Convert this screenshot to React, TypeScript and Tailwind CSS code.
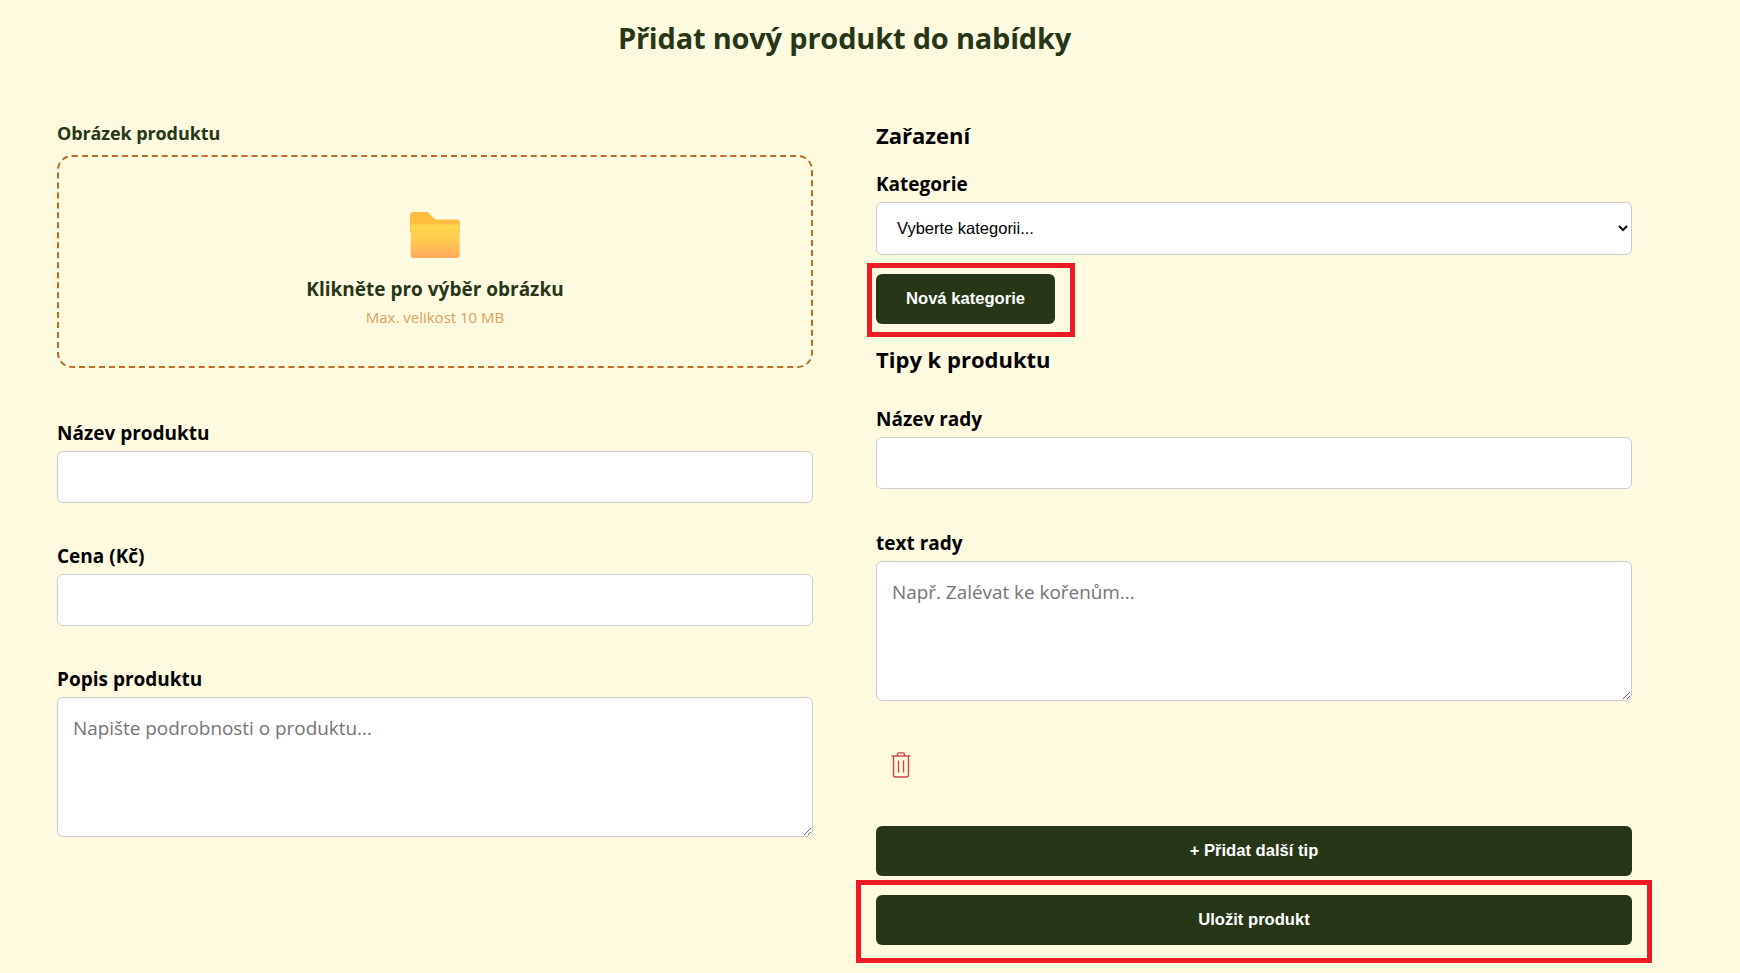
const sans = "font-['Open_Sans','Noto_Sans',sans-serif]";

function Label({ children, dark = false }: { children: React.ReactNode; dark?: boolean }) {
  return (
    <label className={`block h-[22px] mb-[7px] leading-[22px] font-bold ${dark ? "text-[18px] text-[#283618] tracking-[-0.1px]" : "text-[19px] text-black"}`}>
      {children}
    </label>
  );
}

const fieldBase =
  "block w-full bg-white border border-[#cccccc] rounded-[6px] outline-none";

function FolderIcon() {
  return (
    <svg width="50" height="46" viewBox="0 0 50 46" aria-hidden="true">
      <defs>
        <linearGradient id="folderFront" x1="0" y1="0" x2="0" y2="1">
          <stop offset="0" stopColor="#FFD84F" />
          <stop offset="0.45" stopColor="#FFCB4E" />
          <stop offset="1" stopColor="#FFA95E" />
        </linearGradient>
      </defs>
      <path d="M0 3.5A3.5 3.5 0 0 1 3.5 0H17.5L25.5 7.5H46.5A3.5 3.5 0 0 1 50 11V20H0Z" fill="#FFBD40" />
      <rect x="0.7" y="12.5" width="49" height="33.5" rx="3" fill="url(#folderFront)" />
    </svg>
  );
}

function TrashIcon() {
  return (
    <svg width="20" height="26" viewBox="0 0 20 26" fill="none" stroke="#C9464C" strokeWidth="1.4" aria-hidden="true">
      <path d="M0.5 4H19.5" />
      <path d="M6.5 4V2.4A1.5 1.5 0 0 1 8 0.9H12A1.5 1.5 0 0 1 13.5 2.4V4" />
      <path d="M2.5 4V23A2 2 0 0 0 4.5 25H15.5A2 2 0 0 0 17.5 23V4" />
      <path d="M7.5 8.5V20.5" />
      <path d="M12.5 8.5V20.5" />
    </svg>
  );
}

function Annotation({ className }: { className: string }) {
  return <span aria-hidden="true" className={`absolute border-[5px] border-[#ED1C24] pointer-events-none ${className}`} />;
}

function DarkButton({ children, className = "" }: { children: React.ReactNode; className?: string }) {
  return (
    <button
      type="button"
      className={`h-[50px] rounded-[6px] bg-[#283618] text-white text-[16.6px] font-bold font-['Liberation_Sans',sans-serif] ${className}`}
    >
      {children}
    </button>
  );
}

export default function App() {
  return (
    <div className={`min-h-[973px] bg-[#FEFAE0] ${sans}`}>
      <div className="ml-[57px] w-[1575px] pt-[19px]">
        <h1 className="h-[38px] text-center text-[29px] leading-[38px] font-bold tracking-[-0.2px] text-[#283618]">
          Přidat nový produkt do nabídky
        </h1>
        <div className="mt-[65px] grid grid-cols-2 gap-x-[63px]">
          <div>
            <Label dark>Obrázek produktu</Label>
            <div className="mt-[11px] mb-[54px] flex h-[213px] flex-col items-center rounded-[15px] border-2 border-dashed border-[#BC6C25] pt-[55px]">
              <FolderIcon />
              <p className="mt-[18px] h-[26px] text-[19px] leading-[26px] font-bold text-[#283618]">
                Klikněte pro výběr obrázku
              </p>
              <p className="mt-[5px] text-[15px] leading-[20px] text-[#DDA15E]">Max. velikost 10 MB</p>
            </div>
            <Label>Název produktu</Label>
            <input className={`${fieldBase} h-[52px] mb-[42px]`} />
            <Label>Cena (Kč)</Label>
            <input className={`${fieldBase} h-[52px] mb-[42px]`} />
            <Label>Popis produktu</Label>
            <textarea
              className={`${fieldBase} h-[140px] px-[15px] pt-[17px] pb-[15px] text-[18.9px] leading-[26px] placeholder:text-[#757575]`}
              placeholder="Napište podrobnosti o produktu..."
            />
          </div>
          <div>
            <h3 className="mb-[23px] h-[28px] text-[22px] leading-[26px] font-bold text-black">Zařazení</h3>
            <Label>Kategorie</Label>
            <select className={`${fieldBase} h-[53px] px-[16px] pb-[2px] text-[16.5px] font-['Liberation_Sans',sans-serif] text-black`}>
              <option>Vyberte kategorii...</option>
            </select>
            <div className="relative mt-[19px] w-[179px]">
              <DarkButton className="w-full">Nová kategorie</DarkButton>
              <Annotation className="-left-[9px] -right-[20px] -top-[11px] -bottom-[13px]" />
            </div>
            <h3 className="mt-[22px] mb-[34px] h-[28px] text-[22px] leading-[26px] font-bold text-black">Tipy k produktu</h3>
            <Label>Název rady</Label>
            <input className={`${fieldBase} h-[52px] mb-[43px]`} />
            <Label>text rady</Label>
            <textarea
              className={`${fieldBase} h-[140px] px-[15px] pt-[17px] pb-[15px] text-[18.9px] leading-[26px] placeholder:text-[#757575]`}
              placeholder="Např. Zalévat ke kořenům..."
            />
            <div className="mt-[51px] ml-[15px] h-[26px]">
              <TrashIcon />
            </div>
            <DarkButton className="mt-[48px] block w-full">+ Přidat další tip</DarkButton>
            <div className="relative mt-[19px]">
              <DarkButton className="block w-full">Uložit produkt</DarkButton>
              <Annotation className="-left-[20px] -right-[20px] -top-[15px] -bottom-[18px]" />
            </div>
          </div>
        </div>
      </div>
    </div>
  );
}
